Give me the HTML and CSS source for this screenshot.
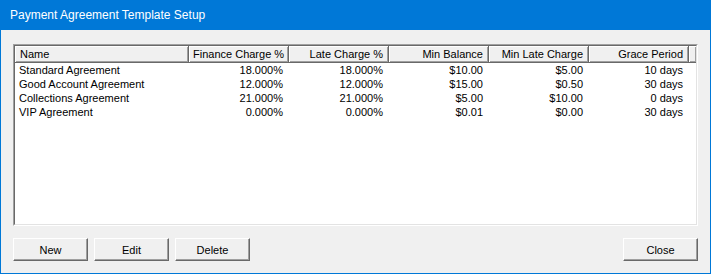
FILE: index.html
```html
<!DOCTYPE html>
<html>
	<head>
		<title>Payment Agreement Template Setup</title>
		<link rel="stylesheet" href="styles.css">
	</head>
	<body>
		<div class="window">
			<div class="titlebar">Payment Agreement Template Setup</div>

			<div class="content">
				<div class="listview">
					<div class="listview-inner">
						<table>
							<colgroup>
								<col class="col-name">
								<col class="col-num">
								<col class="col-num">
								<col class="col-num">
								<col class="col-num">
								<col class="col-num">
								<col>
							</colgroup>
							<tr>
								<th class="left">Name</th>
								<th>Finance Charge %</th>
								<th>Late Charge %</th>
								<th>Min Balance</th>
								<th>Min Late Charge</th>
								<th>Grace Period</th>
								<th class="filler"></th>
							</tr>
							<tr>
								<td class="left">Standard Agreement</td>
								<td>18.000%</td>
								<td>18.000%</td>
								<td>$10.00</td>
								<td>$5.00</td>
								<td>10 days</td>
								<td></td>
							</tr>
							<tr>
								<td class="left">Good Account Agreement</td>
								<td>12.000%</td>
								<td>12.000%</td>
								<td>$15.00</td>
								<td>$0.50</td>
								<td>30 days</td>
								<td></td>
							</tr>
							<tr>
								<td class="left">Collections Agreement</td>
								<td>21.000%</td>
								<td>21.000%</td>
								<td>$5.00</td>
								<td>$10.00</td>
								<td>0 days</td>
								<td></td>
							</tr>
							<tr>
								<td class="left">VIP Agreement</td>
								<td>0.000%</td>
								<td>0.000%</td>
								<td>$0.01</td>
								<td>$0.00</td>
								<td>30 days</td>
								<td></td>
							</tr>
						</table>
					</div>
				</div>

				<div class="buttons">
					<button>New</button>
					<button>Edit</button>
					<button>Delete</button>
					<button class="close">Close</button>
				</div>
			</div>
		</div>
	</body>
</html>
```

FILE: styles.css
```css
body {
	margin: 0;
	background: #f0f0f0;
	font-family: "Liberation Sans", Arial, sans-serif;
	font-size: 11px;
}

.window {
	width: 711px;
	height: 274px;
	box-sizing: border-box;
	border: 1px solid #0078d7;
	border-top: none;
	background: #f0f0f0;
	display: flex;
	flex-direction: column;
}

.titlebar {
	height: 30px;
	background: #0078d7;
	color: #fff;
	font-size: 12px;
	line-height: 31px;
	padding-left: 10px;
	margin: 0 -1px;
}

.content {
	flex: 1;
	display: flex;
	flex-direction: column;
	padding: 14px 12px 12px 12px;
}

.listview {
	height: 182px;
	box-sizing: border-box;
	border: 1px solid;
	border-color: #a0a0a0 #fff #fff #a0a0a0;
}

.listview-inner {
	height: 100%;
	box-sizing: border-box;
	border: 1px solid;
	border-color: #696969 #e3e3e3 #e3e3e3 #696969;
	background: #fff;
	overflow: hidden;
}

table {
	border-spacing: 0;
	table-layout: fixed;
	width: 100%;
	color: #000;
	font: inherit;
}

.col-name {
	width: 174px;
}

.col-num {
	width: 100px;
}

th {
	height: 17px;
	box-sizing: border-box;
	padding: 0 5px 0 4px;
	font-weight: normal;
	text-align: right;
	background: #f0f0f0;
	border-right: 1px solid #696969;
	border-bottom: 1px solid #696969;
	box-shadow: inset 1px 1px #fff, inset -1px -1px #a0a0a0;
	white-space: nowrap;
	overflow: hidden;
}

th.left {
	text-align: left;
	padding-left: 5px;
}

th.filler {
	border-right: none;
	padding: 0;
}

td {
	height: 14px;
	padding: 0 6px 0 4px;
	line-height: 14px;
	text-align: right;
	white-space: nowrap;
	overflow: hidden;
}

td.left {
	text-align: left;
}

.buttons {
	display: flex;
	gap: 6px;
	margin-top: 12px;
}

button {
	width: 75px;
	height: 23px;
	padding: 0;
	font-family: inherit;
	font-size: 11px;
	color: #000;
	background: #f0f0f0;
	border: 1px solid;
	border-color: #fff #696969 #696969 #fff;
	box-shadow: inset -1px -1px #a0a0a0;
}

button.close {
	margin-left: auto;
}
```
